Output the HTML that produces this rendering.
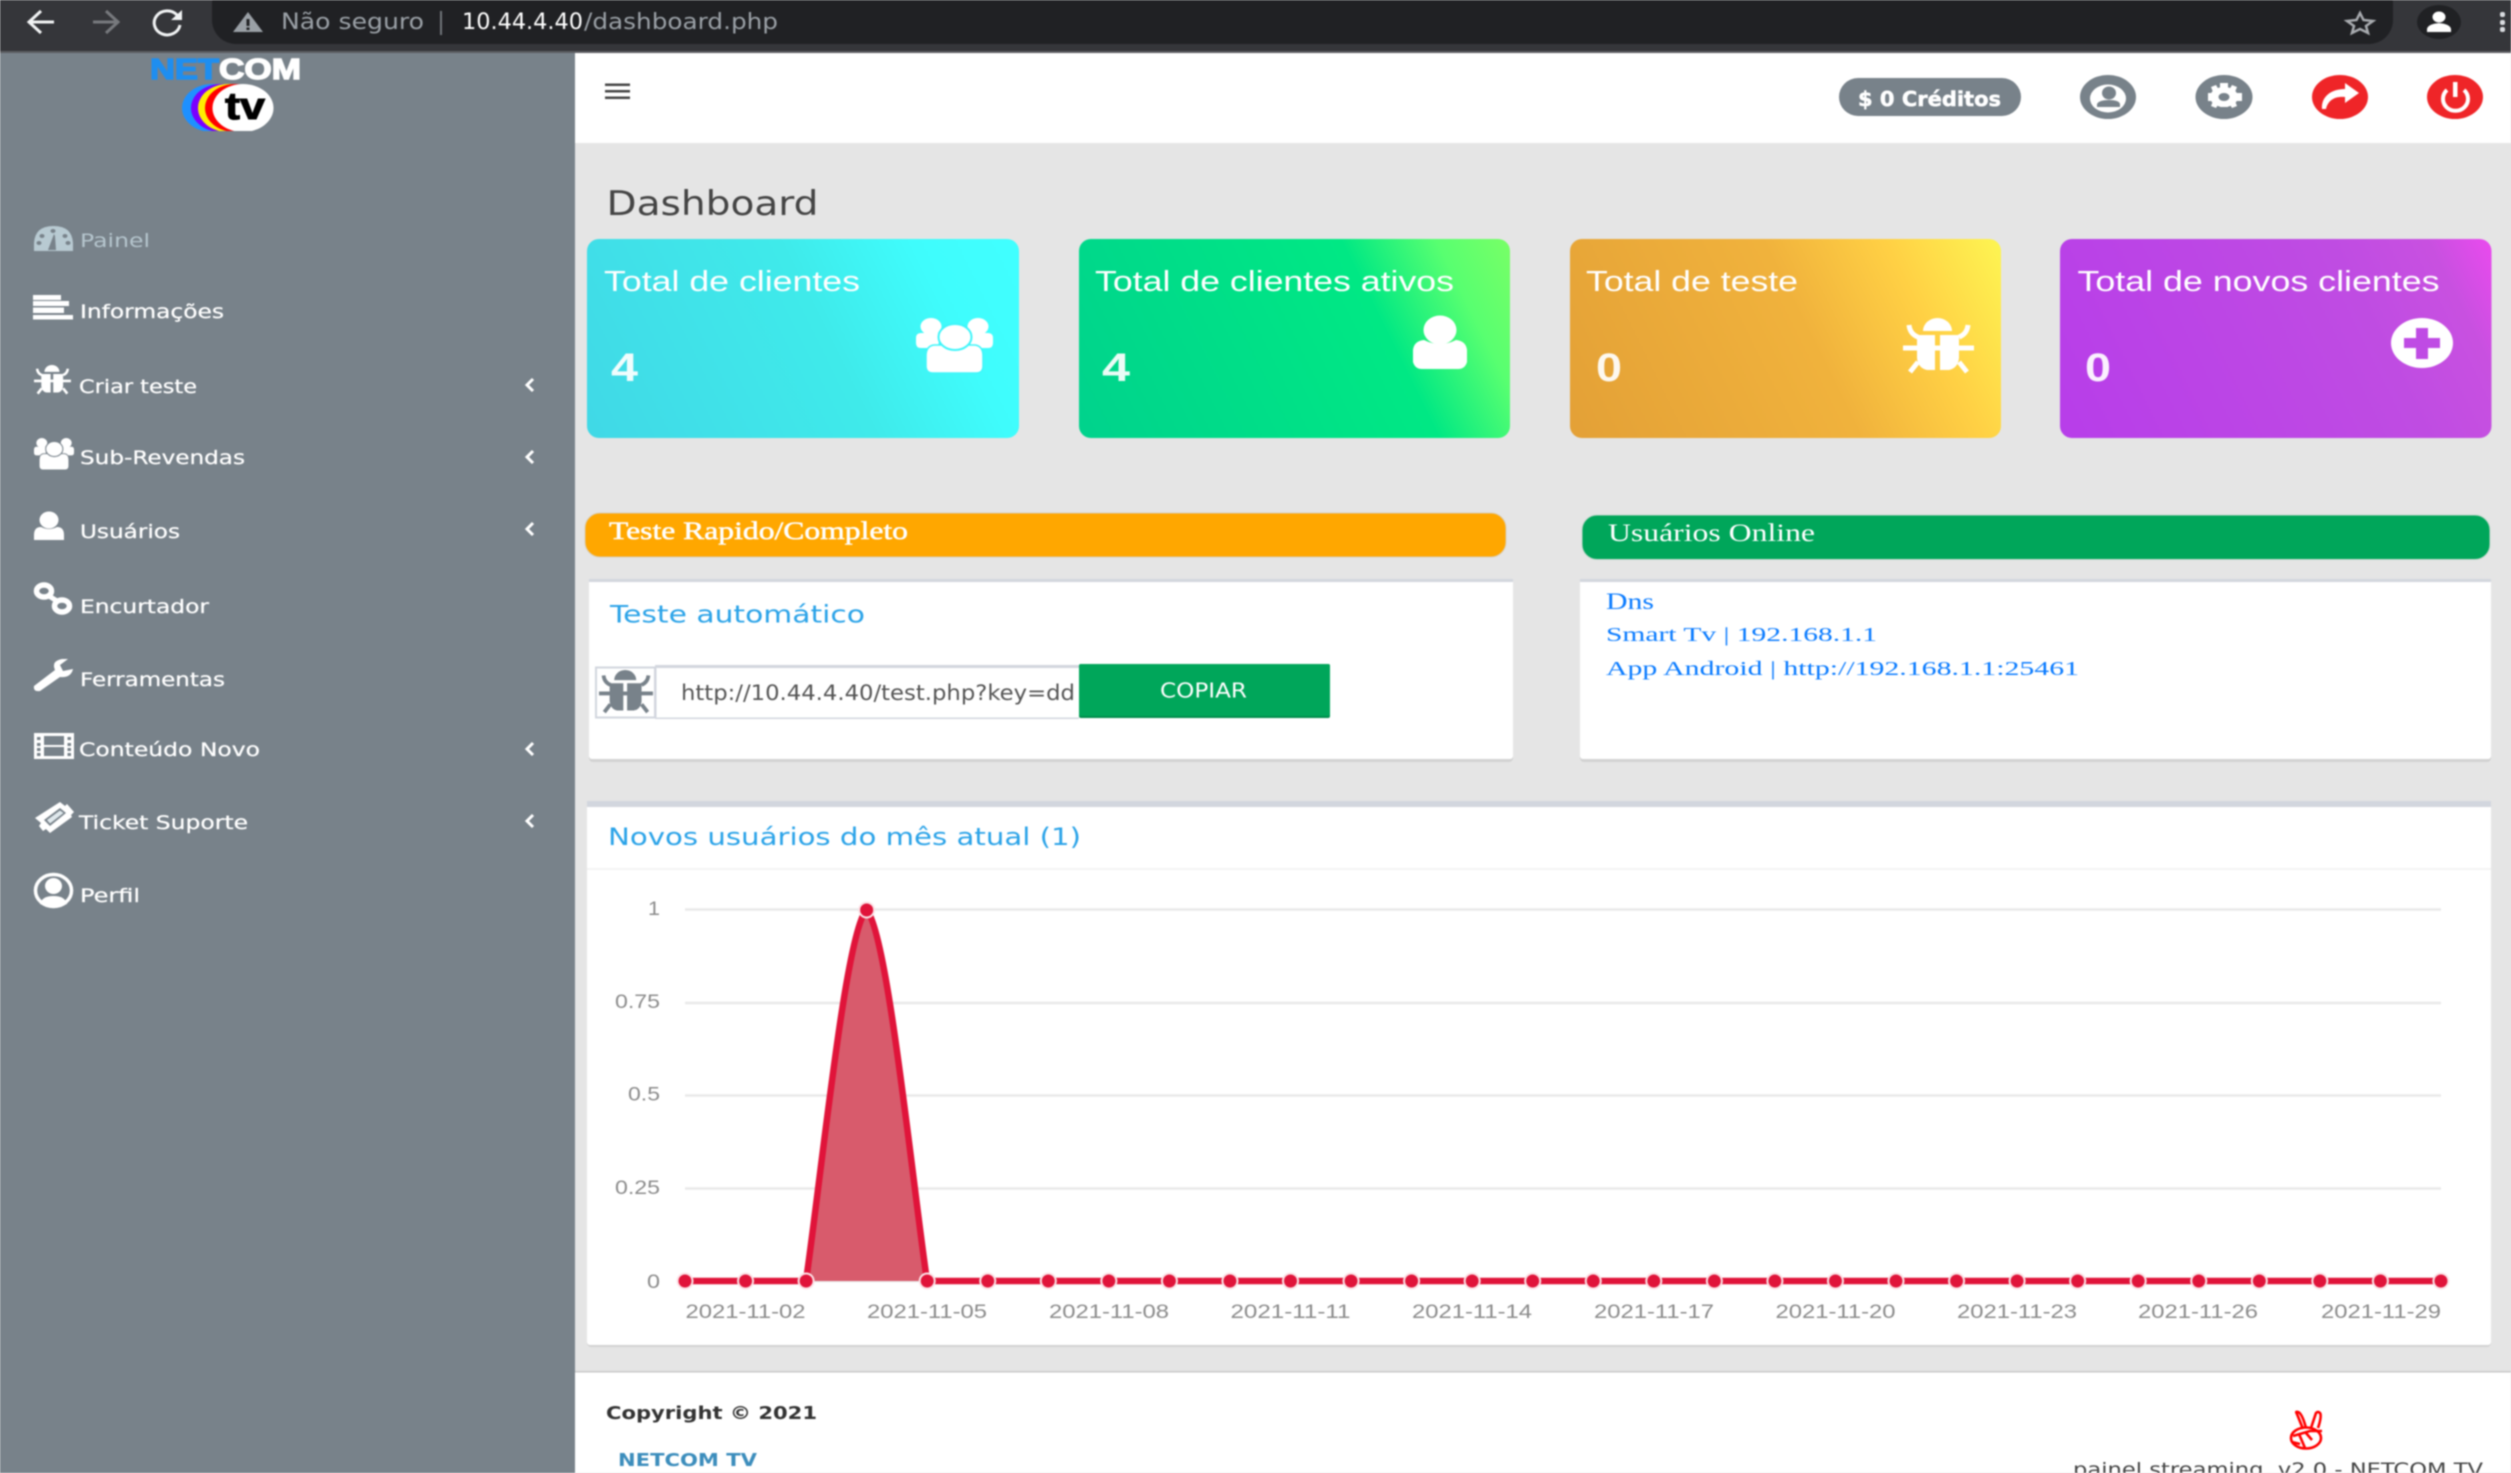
<!DOCTYPE html>
<html lang="pt">
<head>
<meta charset="utf-8">
<title>Dashboard</title>
<style>
html,body{margin:0;padding:0;width:2511px;height:1473px;overflow:hidden;background:#e5e5e5}
svg{display:block;position:absolute;left:0;top:0;filter:blur(.7px)}
.m{font-family:"DejaVu Sans","Liberation Sans",sans-serif;font-size:19px;fill:#fff;stroke:#fff;stroke-width:.25px}
.c{font-family:"Liberation Sans",sans-serif;font-size:29px;fill:#fff}
.n{font-family:"Liberation Sans",sans-serif;font-size:40px;font-weight:bold;fill:#fff;fill-opacity:.92}
.s{font-family:"Liberation Serif",serif;fill:#fff;font-size:25px}
.l{font-family:"Liberation Serif",serif;fill:#0a7bff}
.t{font-family:"DejaVu Sans","Liberation Sans",sans-serif;font-size:24px;fill:#2ba3e8}
.a{font-family:"Liberation Sans",sans-serif;font-size:19px;fill:#8b8b8b}
.b{font-family:"DejaVu Sans","Liberation Sans",sans-serif;font-size:22px;fill:#9aa0a6}
</style>
</head>
<body>
<svg xmlns="http://www.w3.org/2000/svg" width="2511" height="1473" viewBox="0 0 2511 1473">
<defs>
<linearGradient id="g1" gradientUnits="userSpaceOnUse" x1="587" y1="438" x2="1012" y2="227"><stop offset="0" stop-color="#40d8e6"/><stop offset=".55" stop-color="#3feaea"/><stop offset=".8" stop-color="#3ffcfc"/><stop offset="1" stop-color="#40ffff"/></linearGradient>
<linearGradient id="g2" gradientUnits="userSpaceOnUse" x1="1079" y1="438" x2="1504" y2="227"><stop offset="0" stop-color="#00d28c"/><stop offset=".68" stop-color="#00e884"/><stop offset=".86" stop-color="#58ff70"/><stop offset="1" stop-color="#78ff66"/></linearGradient>
<linearGradient id="g3" gradientUnits="userSpaceOnUse" x1="1570" y1="438" x2="1995" y2="227"><stop offset="0" stop-color="#e3a036"/><stop offset=".55" stop-color="#f0b23c"/><stop offset=".78" stop-color="#ffd044"/><stop offset="1" stop-color="#fdf552"/></linearGradient>
<linearGradient id="g4" gradientUnits="userSpaceOnUse" x1="2060" y1="438" x2="2485" y2="227"><stop offset="0" stop-color="#b73de9"/><stop offset=".7" stop-color="#bf4ce2"/><stop offset=".88" stop-color="#c850e0"/><stop offset="1" stop-color="#ea4aee"/></linearGradient>
<clipPath id="lc"><rect x="170" y="84" width="120" height="47"/></clipPath>
<g id="bug">
<path d="M20 13a14.500 13 0 0 1 29 0z"/>
<path d="M14 17H32V52H24Q15 50 14 40zM37 17H56V40Q55 50 46 52H37z"/>
<path d="M6 7Q7 16 15 19M65 7Q64 16 56 19M0 30H71M15 44L7 54M56 44L64 54" fill="none" stroke-width="5" stroke="currentColor"/>
</g>
<g id="users">
<ellipse cx="15" cy="8.500" rx="10.500" ry="8.500"/><ellipse cx="62" cy="8.500" rx="10.500" ry="8.500"/>
<path d="M0 20Q0 15 5 15H24L22 30H5Q0 30 0 25zM77 20Q77 15 72 15H53L55 30H72Q77 30 77 25z"/>
<path d="M10 38Q10 28 18 27H59Q67 28 67 38V48Q67 55 60 55H17Q10 55 10 48z" stroke="currentColor" stroke-width="1.500"/>
<ellipse cx="39" cy="19" rx="16.500" ry="13" stroke="currentColor" stroke-width="2"/>
</g>
</defs>

<!-- page -->
<rect width="2511" height="1473" fill="#e5e5e5"/>

<!-- browser bar -->
<rect width="2511" height="53" fill="#35363a"/>
<rect y="51" width="2511" height="2" fill="#5c5d61"/>
<rect x="212" y="-20" width="2181" height="64" rx="24" fill="#202124"/>
<path d="M54 22H30M41 11L29 22L41 33" fill="none" stroke="#f1f3f4" stroke-width="3"/>
<path d="M117 22H93M106 11L118 22L106 33" fill="none" stroke="#77797d" stroke-width="3"/>
<path d="M177 15A13 12 0 1 0 180 25" fill="none" stroke="#f1f3f4" stroke-width="3"/>
<path d="M182 10V20H171z" fill="#f1f3f4"/>
<path d="M248 12L263 32H233z" fill="#9aa0a6"/>
<rect x="246.500" y="19" width="3" height="7" fill="#202124"/><rect x="246.500" y="27.500" width="3" height="2.500" fill="#202124"/>
<text class="b" x="281" y="29" textLength="143" lengthAdjust="spacingAndGlyphs">Não seguro</text>
<rect x="440" y="11" width="2" height="24" fill="#70757a"/>
<text class="b" x="462" y="29" textLength="121" lengthAdjust="spacingAndGlyphs" style="fill:#fff">10.44.4.40</text>
<text class="b" x="584" y="29" textLength="194" lengthAdjust="spacingAndGlyphs">/dashboard.php</text>
<path d="M2360 13L2363.500 20L2373 21L2366 26L2368 33L2360 29L2352 33L2354 26L2347 21L2356.500 20z" fill="none" stroke="#a8abaf" stroke-width="2.500"/>
<ellipse cx="2439" cy="22" rx="22" ry="17" fill="#202124"/>
<ellipse cx="2439" cy="17" rx="6.500" ry="5.500" fill="#fff"/>
<path d="M2427 32V29Q2428 24 2439 23Q2450 24 2451 29V32z" fill="#fff"/>
<rect x="2500" y="12" width="5" height="5" rx="2" fill="#dadce0"/><rect x="2500" y="20" width="5" height="5" rx="2" fill="#dadce0"/><rect x="2500" y="27" width="5" height="5" rx="2" fill="#dadce0"/>

<!-- sidebar -->
<rect y="53" width="575" height="1420" fill="#78828a"/>

<!-- logo -->
<text x="150" y="79" textLength="69" lengthAdjust="spacingAndGlyphs" font-family="Liberation Sans,sans-serif" font-weight="bold" font-size="29" fill="#1e8ef0" stroke="#1e8ef0" stroke-width="1.400">NET</text>
<text x="219" y="79" textLength="82" lengthAdjust="spacingAndGlyphs" font-family="Liberation Sans,sans-serif" font-weight="bold" font-size="29" fill="#fff" stroke="#fff" stroke-width="1.400">COM</text>
<g clip-path="url(#lc)">
<ellipse cx="212" cy="108" rx="30" ry="24" fill="#1e90ff"/>
<ellipse cx="221" cy="108" rx="30" ry="24" fill="#7a00ff"/>
<ellipse cx="228" cy="108" rx="30" ry="24" fill="#ffee00"/>
<ellipse cx="235" cy="108" rx="30" ry="24" fill="#ff0000"/>
<ellipse cx="243" cy="108" rx="30.500" ry="24" fill="#fff"/>
</g>
<text x="225" y="119" textLength="40" lengthAdjust="spacingAndGlyphs" font-family="Liberation Sans,sans-serif" font-weight="bold" font-size="38" fill="#000" stroke="#000" stroke-width="1">tv</text>

<!-- menu -->
<!-- gauge -->
<path d="M34 251V243Q35 226 53.500 226Q72 226 73 243V251z" fill="#b8cad2"/>
<g fill="#78828a"><ellipse cx="53" cy="231" rx="2.500" ry="2"/><ellipse cx="42" cy="236" rx="2.500" ry="2"/><ellipse cx="65" cy="236" rx="2.500" ry="2"/><ellipse cx="39" cy="243" rx="2.500" ry="2"/><ellipse cx="68" cy="243" rx="2.500" ry="2"/><path d="M48 250L54 234L55 236L56 250z"/></g>
<text class="m" x="80" y="247" textLength="70" lengthAdjust="spacingAndGlyphs" style="fill:#b5c5cd;stroke:none">Painel</text>

<g fill="#fff"><rect x="33" y="295" width="28" height="5"/><rect x="33" y="301" width="36" height="5"/><rect x="33" y="307.500" width="31" height="5.500"/><rect x="33" y="315" width="40" height="4.500"/></g>
<text class="m" x="80" y="318" textLength="144" lengthAdjust="spacingAndGlyphs">Informações</text>

<use href="#bug" transform="translate(34 365) scale(.52 .53)" fill="#fff" stroke="none" color="#fff"/>
<text class="m" x="79" y="393" textLength="118" lengthAdjust="spacingAndGlyphs">Criar teste</text>

<use href="#users" transform="translate(34 438) scale(.52 .58)" fill="#fff" color="#78828a"/>
<text class="m" x="80" y="464" textLength="165" lengthAdjust="spacingAndGlyphs">Sub-Revendas</text>

<ellipse cx="49" cy="520" rx="9.500" ry="8.500" fill="#fff"/>
<path d="M34 540V535Q34 527 41 527Q49 531 57 527Q64 527 64 535V540z" fill="#fff"/>
<text class="m" x="80" y="538" textLength="100" lengthAdjust="spacingAndGlyphs">Usuários</text>

<g fill="none" stroke="#fff"><ellipse cx="44" cy="591" rx="7.500" ry="6" stroke-width="5.500"/><ellipse cx="62" cy="606" rx="7.500" ry="6" stroke-width="5.500"/><path d="M49 596L57 601" stroke-width="5"/></g>
<text class="m" x="80" y="613" textLength="129" lengthAdjust="spacingAndGlyphs">Encurtador</text>

<path d="M34 686L55 670Q51 661 62 659L68 659L60 665L63 671L73 669Q71 678 60 677L40 691Q33 692 34 686z" fill="#fff"/>
<text class="m" x="80" y="686" textLength="145" lengthAdjust="spacingAndGlyphs">Ferramentas</text>

<rect x="34" y="733" width="40" height="26" fill="#fff"/>
<g fill="#78828a"><rect x="44" y="736" width="20" height="9"/><rect x="44" y="747" width="20" height="9"/><rect x="37" y="737" width="3.500" height="3"/><rect x="37" y="743" width="3.500" height="3"/><rect x="37" y="748" width="3.500" height="3"/><rect x="37" y="753" width="3.500" height="3"/><rect x="67.500" y="737" width="3.500" height="3"/><rect x="67.500" y="743" width="3.500" height="3"/><rect x="67.500" y="748" width="3.500" height="3"/><rect x="67.500" y="753" width="3.500" height="3"/></g>
<text class="m" x="79" y="756" textLength="181" lengthAdjust="spacingAndGlyphs">Conteúdo Novo</text>

<path d="M35 818L60 802L65 806L67 804L74 812L71 815L72 817L50 833L46 829L43 831L39 826L41 823z" fill="#fff"/>
<path d="M44 820L60 808L66 813L50 826z" fill="#78828a"/><path d="M47 820L60 810.500L63.500 813L50 823.500z" fill="#dfe8ec"/>
<text class="m" x="79" y="829" textLength="169" lengthAdjust="spacingAndGlyphs">Ticket Suporte</text>

<ellipse cx="53.500" cy="890.500" rx="18" ry="16" fill="none" stroke="#fff" stroke-width="3.500"/>
<ellipse cx="53.500" cy="886" rx="8.500" ry="8" fill="#fff"/>
<path d="M40 904Q42 896 53.500 896Q65 896 67 904Q54 910 40 904z" fill="#fff"/>
<text class="m" x="80" y="902" textLength="60" lengthAdjust="spacingAndGlyphs">Perfil</text>

<g fill="none" stroke="#fff" stroke-width="3"><path d="M533 379L527 385L533 391"/><path d="M533 451L527 457L533 463"/><path d="M533 523L527 529L533 535"/><path d="M533 743L527 749L533 755"/><path d="M533 815L527 821L533 827"/></g>

<!-- header -->
<rect x="575" y="53" width="1936" height="90" fill="#fff"/>
<g fill="#444"><rect x="605" y="83.500" width="25" height="2.500"/><rect x="605" y="90" width="25" height="2.500"/><rect x="605" y="96.500" width="25" height="2.500"/></g>
<rect x="1839" y="78" width="182" height="38" rx="19" fill="#78828a"/>
<text x="1858" y="106" textLength="143" lengthAdjust="spacingAndGlyphs" font-family="DejaVu Sans,sans-serif" font-weight="bold" font-size="20" fill="#fff" stroke="#fff" stroke-width=".5">$ 0 Créditos</text>

<ellipse cx="2108" cy="97" rx="28" ry="22" fill="#78828a"/>
<ellipse cx="2108" cy="98.500" rx="18" ry="14" fill="#fff"/>
<ellipse cx="2109" cy="93" rx="7" ry="6.500" fill="#78828a"/>
<path d="M2097 107V104Q2099 100 2109 100Q2119 100 2120 104V107z" fill="#78828a"/>

<ellipse cx="2224" cy="97" rx="28.500" ry="22" fill="#78828a"/>
<ellipse cx="2224" cy="97" rx="14" ry="10" fill="#fff"/>
<g fill="#fff"><rect x="2220" y="83" width="8" height="24"/><rect x="2208" y="93" width="34" height="8"/><path d="M2211 87L2216 85L2219 90L2213 92zM2237 87L2232 85L2229 90L2235 92zM2211 106L2216 108L2219 103L2213 101zM2237 106L2232 108L2229 103L2235 101z"/></g>
<ellipse cx="2224" cy="97" rx="5.500" ry="4" fill="#78828a"/>

<ellipse cx="2340" cy="97" rx="28" ry="22" fill="#ef2528"/>
<path d="M2322 109C2321 96 2332 89 2345 89V83L2359 93L2345 103V97C2335 96 2328 100 2326 109z" fill="#fff"/>

<ellipse cx="2455" cy="97" rx="28" ry="22" fill="#ef2528"/>
<path d="M2447 90A12.500 12 0 1 0 2464 90" fill="none" stroke="#fff" stroke-width="4"/>
<rect x="2453" y="82" width="4.500" height="15" fill="#fff"/>

<!-- title -->
<text x="606.500" y="215" textLength="212" lengthAdjust="spacingAndGlyphs" font-family="DejaVu Sans,sans-serif" font-size="34" fill="#444">Dashboard</text>

<!-- cards -->
<rect x="587" y="239" width="432" height="199" rx="12" fill="url(#g1)"/>
<rect x="1079" y="239" width="431" height="199" rx="12" fill="url(#g2)"/>
<rect x="1570" y="239" width="431" height="199" rx="12" fill="url(#g3)"/>
<rect x="2060" y="239" width="431.500" height="199" rx="12" fill="url(#g4)"/>
<text class="c" x="604" y="291" textLength="256" lengthAdjust="spacingAndGlyphs">Total de clientes</text>
<text class="c" x="1095" y="291" textLength="359" lengthAdjust="spacingAndGlyphs">Total de clientes ativos</text>
<text class="c" x="1586" y="291" textLength="212" lengthAdjust="spacingAndGlyphs">Total de teste</text>
<text class="c" x="2077.500" y="291" textLength="362" lengthAdjust="spacingAndGlyphs">Total de novos clientes</text>
<text class="n" x="611" y="381" textLength="27" lengthAdjust="spacingAndGlyphs">4</text>
<text class="n" x="1102" y="381" textLength="28" lengthAdjust="spacingAndGlyphs">4</text>
<text class="n" x="1596" y="381" textLength="26" lengthAdjust="spacingAndGlyphs">0</text>
<text class="n" x="2085" y="381" textLength="26" lengthAdjust="spacingAndGlyphs">0</text>
<use href="#users" transform="translate(916 318)" fill="#fff" color="#3ff5fa"/>
<ellipse cx="1440" cy="330" rx="16.500" ry="14.500" fill="#fff"/>
<path d="M1413 350Q1414 341 1424 340Q1440 348 1456 340Q1466 341 1467 350V362Q1465 369 1458 369H1422Q1415 369 1413 362z" fill="#fff"/>
<use href="#bug" transform="translate(1903 318)" fill="#fff" color="#fff"/>
<ellipse cx="2422" cy="343" rx="31" ry="25" fill="#fff"/>
<g fill="#bf4be4"><rect x="2416" y="328" width="12" height="31"/><rect x="2404" y="338" width="36" height="10"/></g>

<!-- section bars -->
<rect x="585" y="513" width="921" height="44" rx="15" fill="#ffa700" stroke="#d9ceb8" stroke-width="1"/>
<text class="s" x="609" y="539" textLength="299" lengthAdjust="spacingAndGlyphs" stroke="#fff" stroke-width=".5">Teste Rapido/Completo</text>
<rect x="1582" y="515" width="908" height="44.500" rx="15" fill="#00a65a" stroke="#c8d8cf" stroke-width="1"/>
<text class="s" x="1608" y="541" textLength="207" lengthAdjust="spacingAndGlyphs">Usuários Online</text>

<!-- panel left -->
<rect x="589" y="581" width="924" height="181" rx="4" fill="#d2d2d2"/>
<rect x="589" y="579" width="924" height="180" rx="3" fill="#fff"/>
<rect x="589" y="579" width="924" height="3" fill="#d2d6de"/>
<text class="t" x="610" y="622.500" textLength="255" lengthAdjust="spacingAndGlyphs">Teste automático</text>
<rect x="596" y="667.500" width="59" height="50" fill="#fff" stroke="#d2d6de" stroke-width="2"/>
<use href="#bug" transform="translate(599 670) scale(.76 .78)" fill="#78828a" color="#78828a"/>
<rect x="655" y="665" width="424" height="3" fill="#d2d6de"/>
<rect x="655" y="717.500" width="424" height="1.500" fill="#d2d6de"/>
<rect x="655" y="665" width="1.500" height="54" fill="#d2d6de"/>
<text x="681" y="700" textLength="394" lengthAdjust="spacingAndGlyphs" font-family="DejaVu Sans,sans-serif" font-size="21" fill="#555">http://10.44.4.40/test.php?key=dd</text>
<rect x="1079" y="664" width="251" height="54" rx="2" fill="#008d4c"/>
<rect x="1079" y="664" width="251" height="52" rx="2" fill="#00a65a"/>
<text x="1160" y="697.500" textLength="87" lengthAdjust="spacingAndGlyphs" font-family="DejaVu Sans,sans-serif" font-size="20" fill="#fff">COPIAR</text>

<!-- panel right -->
<rect x="1580" y="581" width="911" height="181" rx="4" fill="#d2d2d2"/>
<rect x="1580" y="579" width="911" height="180" rx="3" fill="#fff"/>
<rect x="1580" y="579" width="911" height="3" fill="#d2d6de"/>
<text class="l" x="1606" y="609" textLength="48" lengthAdjust="spacingAndGlyphs" font-size="23">Dns</text>
<text class="l" x="1606" y="641" textLength="271" lengthAdjust="spacingAndGlyphs" font-size="20">Smart Tv | 192.168.1.1</text>
<text class="l" x="1606" y="675" textLength="473" lengthAdjust="spacingAndGlyphs" font-size="20">App Android | http://192.168.1.1:25461</text>

<!-- chart panel -->
<rect x="587" y="803" width="1904" height="544" rx="4" fill="#d2d2d2"/>
<rect x="587" y="801" width="1904" height="544" rx="3" fill="#fff"/>
<rect x="587" y="801" width="1904" height="6" fill="#d2d6de"/>
<rect x="587" y="868" width="1904" height="2" fill="#f4f4f4"/>
<text class="t" x="608" y="845" textLength="473" lengthAdjust="spacingAndGlyphs">Novos usuários do mês atual (1)</text>

<g stroke="#e9e9e9" stroke-width="2.500"><path d="M685 909.500H2441M685 1003H2441M685 1095.500H2441M685 1188.500H2441M685 1281H2441"/></g>
<text class="a" x="648" y="915" textLength="12" lengthAdjust="spacingAndGlyphs">1</text>
<text class="a" x="615" y="1008" textLength="45" lengthAdjust="spacingAndGlyphs">0.75</text>
<text class="a" x="628" y="1100.500" textLength="32" lengthAdjust="spacingAndGlyphs">0.5</text>
<text class="a" x="615" y="1194" textLength="45" lengthAdjust="spacingAndGlyphs">0.25</text>
<text class="a" x="647" y="1288" textLength="13" lengthAdjust="spacingAndGlyphs">0</text>

<path d="M806 1281C822 1170 846 930 866.500 910C887 930 911 1170 927 1281z" fill="#d85b6c"/>
<path d="M685 1281H806C822 1170 846 930 866.500 910C887 930 911 1170 927 1281H2441" fill="none" stroke="#e0143a" stroke-width="6.500"/>
<path d="M685 1281h.01M745.550 1281h.01M806.100 1281h.01M866.650 910h.01M927.200 1281h.01M987.750 1281h.01M1048.300 1281h.01M1108.850 1281h.01M1169.400 1281h.01M1229.950 1281h.01M1290.500 1281h.01M1351.050 1281h.01M1411.600 1281h.01M1472.150 1281h.01M1532.700 1281h.01M1593.250 1281h.01M1653.800 1281h.01M1714.350 1281h.01M1774.900 1281h.01M1835.450 1281h.01M1896 1281h.01M1956.550 1281h.01M2017.100 1281h.01M2077.650 1281h.01M2138.200 1281h.01M2198.750 1281h.01M2259.300 1281h.01M2319.850 1281h.01M2380.400 1281h.01M2440.950 1281h.01" fill="none" stroke="#fbe3e7" stroke-width="17" stroke-linecap="round"/>
<path d="M685 1281h.01M745.550 1281h.01M806.100 1281h.01M866.650 910h.01M927.200 1281h.01M987.750 1281h.01M1048.300 1281h.01M1108.850 1281h.01M1169.400 1281h.01M1229.950 1281h.01M1290.500 1281h.01M1351.050 1281h.01M1411.600 1281h.01M1472.150 1281h.01M1532.700 1281h.01M1593.250 1281h.01M1653.800 1281h.01M1714.350 1281h.01M1774.900 1281h.01M1835.450 1281h.01M1896 1281h.01M1956.550 1281h.01M2017.100 1281h.01M2077.650 1281h.01M2138.200 1281h.01M2198.750 1281h.01M2259.300 1281h.01M2319.850 1281h.01M2380.400 1281h.01M2440.950 1281h.01" fill="none" stroke="#e0143a" stroke-width="13" stroke-linecap="round"/>

<g>
<text class="a" x="685.500" y="1318" textLength="120" lengthAdjust="spacingAndGlyphs">2021-11-02</text>
<text class="a" x="867" y="1318" textLength="120" lengthAdjust="spacingAndGlyphs">2021-11-05</text>
<text class="a" x="1049" y="1318" textLength="120" lengthAdjust="spacingAndGlyphs">2021-11-08</text>
<text class="a" x="1230.500" y="1318" textLength="120" lengthAdjust="spacingAndGlyphs">2021-11-11</text>
<text class="a" x="1412" y="1318" textLength="120" lengthAdjust="spacingAndGlyphs">2021-11-14</text>
<text class="a" x="1594" y="1318" textLength="120" lengthAdjust="spacingAndGlyphs">2021-11-17</text>
<text class="a" x="1775.500" y="1318" textLength="120" lengthAdjust="spacingAndGlyphs">2021-11-20</text>
<text class="a" x="1957" y="1318" textLength="120" lengthAdjust="spacingAndGlyphs">2021-11-23</text>
<text class="a" x="2138" y="1318" textLength="120" lengthAdjust="spacingAndGlyphs">2021-11-26</text>
<text class="a" x="2321" y="1318" textLength="120" lengthAdjust="spacingAndGlyphs">2021-11-29</text>
</g>

<!-- footer -->
<rect x="575" y="1372" width="1936" height="101" fill="#fff"/>
<rect x="575" y="1371" width="1936" height="1.500" fill="#c9c9c9"/>
<text x="606" y="1419" textLength="211" lengthAdjust="spacingAndGlyphs" font-family="DejaVu Sans,sans-serif" font-weight="bold" font-size="18" fill="#333">Copyright © 2021</text>
<text x="618" y="1466" textLength="139" lengthAdjust="spacingAndGlyphs" font-family="DejaVu Sans,sans-serif" font-weight="bold" font-size="18" fill="#3c8dbc">NETCOM TV</text>
<g fill="none" stroke="#f00" stroke-width="2.600">
<path d="M2303 1429L2297 1414Q2295 1411 2298 1412Q2302 1413 2306 1428M2311 1428L2316 1413Q2318 1411 2320 1413Q2322 1416 2318 1428"/>
<ellipse cx="2306" cy="1438" rx="15" ry="10.500"/>
<path d="M2293 1436L2310 1431L2322 1431M2299 1434L2305 1448M2306 1433L2312 1440M2292 1442L2300 1444"/>
</g>
<text x="2073" y="1476" textLength="410" lengthAdjust="spacingAndGlyphs" xml:space="preserve" font-family="DejaVu Sans,sans-serif" font-size="19" fill="#444">painel streaming  v2.0 - NETCOM TV</text>
</svg>
</body>
</html>
